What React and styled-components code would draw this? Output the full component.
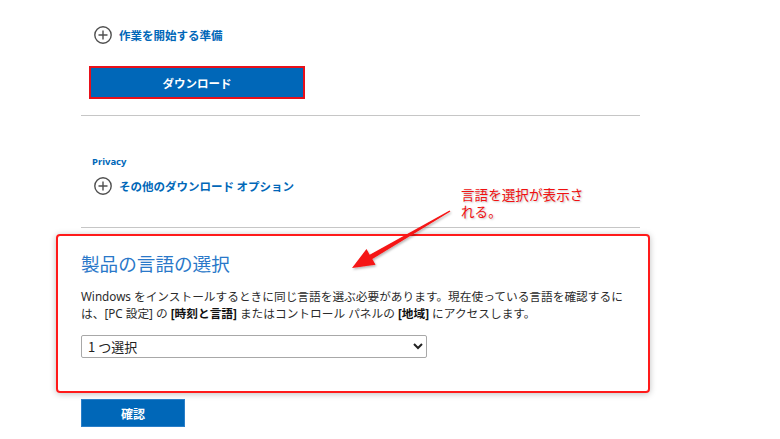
import React from "react";
import styled, { createGlobalStyle } from "styled-components";

const Global = createGlobalStyle`
  html, body { margin: 0; padding: 0; background: #fff; }
  body { font-family: "Noto Sans", "Noto Sans CJK JP", sans-serif; }
`;

const Page = styled.div`
  position: relative;
  width: 780px;
  height: 439px;
  overflow: hidden;
  background: #fff;
`;

const Column = styled.div`
  width: 559px;
  margin-left: 81px;
  padding-top: 26px;
  display: flex;
  flex-direction: column;
`;

const Section = styled.div`
  display: flex;
  flex-direction: column;
  align-items: flex-start;
  padding-left: ${(p) => p.$indent || 0}px;
`;

const Expander = styled.div`
  display: flex;
  align-items: center;
  gap: 7px;
  height: 18px;
  margin-left: ${(p) => p.$ml || 0}px;
  margin-top: ${(p) => p.$mt || 0}px;
  color: #0067b8;
  font-family: "Noto Sans CJK JP", sans-serif;
  font-weight: 700;
  font-size: 11.5px;
  white-space: pre;
`;

const DownloadButton = styled.button`
  margin-top: 22px;
  width: 216px;
  height: 33px;
  border: 2px solid #e8101a;
  background: #0067b8;
  color: #fff;
  font-family: "Noto Sans CJK JP", sans-serif;
  font-weight: 700;
  font-size: 11.5px;
  padding: 0;
`;

const Separator = styled.hr`
  width: 100%;
  border: 0;
  height: 1px;
  background: #c6c6c6;
  margin: ${(p) => p.$mt}px 0 0 0;
`;

const Privacy = styled.div`
  margin-top: 40px;
  margin-left: 11px;
  color: #0067b8;
  font-size: 9.5px;
  font-weight: 700;
  line-height: 12px;
`;

const LangBox = styled.div`
  margin: 6px -10px 0 -25px;
  height: 159px;
  box-sizing: border-box;
  border: 2px solid #ff1a1a;
  border-radius: 4px;
  box-shadow: 0 1px 6px rgba(0, 0, 0, 0.25);
  padding: 13px 10px 0 23px;
  display: flex;
  flex-direction: column;
  align-items: flex-start;
`;

const Heading = styled.h2`
  margin: 0;
  font-family: "Noto Sans CJK JP", sans-serif;
  font-weight: 400;
  font-size: 18.6px;
  line-height: 28px;
  color: #2a78c9;
`;

const Para = styled.p`
  margin: 11px 0 0 0;
  font-family: "Noto Sans", "Noto Sans CJK JP", sans-serif;
  font-size: 11.7px;
  line-height: 17px;
  color: #2b2b2b;
  white-space: nowrap;
  b { font-weight: 700; color: #111; }
`;

const Select = styled.select`
  margin-top: 13px;
  width: 346px;
  height: 23px;
  border: 1px solid #a8a8a8;
  border-radius: 2px;
  background: #fff;
  color: #222;
  font-family: "Noto Sans CJK JP", sans-serif;
  font-size: 13px;
  padding: 0 2px;
`;

const ConfirmButton = styled.button`
  margin-top: 6px;
  width: 104px;
  height: 28px;
  border: 1px solid #2a7fc9;
  background: #0067b8;
  color: #fff;
  font-family: "Noto Sans CJK JP", sans-serif;
  font-weight: 700;
  font-size: 12px;
  padding: 0;
`;

const Note = styled.div`
  position: absolute;
  left: 461px;
  top: 186px;
  color: #f01010;
  font-family: "Noto Sans CJK JP", sans-serif;
  font-size: 13.6px;
  line-height: 17px;
  text-shadow: 1px 1px 2px rgba(0, 0, 0, 0.25);
`;

const ArrowSvg = styled.svg`
  position: absolute;
  left: 0;
  top: 0;
  pointer-events: none;
`;

const PlusIcon = () => (
  <svg width="18" height="18" viewBox="0 0 18 18">
    <circle cx="9" cy="9" r="8.2" fill="none" stroke="#505050" strokeWidth="1.4" />
    <path d="M9 4.5v9M4.5 9h9" stroke="#505050" strokeWidth="1.4" />
  </svg>
);

export default function App() {
  return (
    <>
      <Global />
      <Page>
        <Column>
          <Section $indent={8}>
            <Expander $ml={5}>
              <PlusIcon />
              作業を開始する準備
            </Expander>
            <DownloadButton>ダウンロード</DownloadButton>
          </Section>
          <Separator $mt={16} />
          <Section $indent={0}>
            <Privacy>Privacy</Privacy>
            <Expander $ml={13} $mt={9}>
              <PlusIcon />
              その他のダウンロード オプション
            </Expander>
          </Section>
          <Separator $mt={32} />
          <LangBox>
            <Heading>製品の言語の選択</Heading>
            <Para>
              Windows をインストールするときに同じ言語を選ぶ必要があります。現在使っている言語を確認するに
              <br />
              は、[PC 設定] の <b>[時刻と言語]</b> またはコントロール パネルの <b>[地域]</b> にアクセスします。
            </Para>
            <Select defaultValue="">
              <option value="">1 つ選択</option>
            </Select>
          </LangBox>
          <Section>
            <ConfirmButton>確認</ConfirmButton>
          </Section>
        </Column>
        <Note>
          言語を選択が表示さ
          <br />
          れる。
        </Note>
        <ArrowSvg width="780" height="439" viewBox="0 0 780 439">
          <defs>
            <filter id="sh" x="-20%" y="-20%" width="140%" height="140%">
              <feDropShadow dx="1" dy="1.5" stdDeviation="1.2" floodColor="#000" floodOpacity="0.3" />
            </filter>
          </defs>
          <polygon
            filter="url(#sh)"
            fill="#f51414"
            points="450.4,211.6 449.6,210.4 369.7,254.7 366.5,249.1 352,268 375.5,264.7 372.3,259.1"
          />
        </ArrowSvg>
      </Page>
    </>
  );
}
